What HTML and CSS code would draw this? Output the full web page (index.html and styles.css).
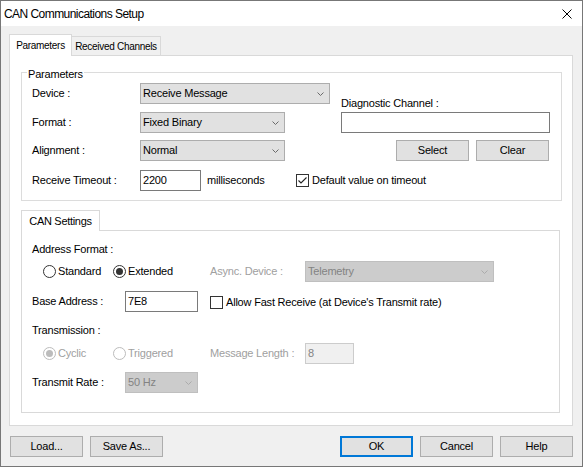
FILE: index.html
```html
<!DOCTYPE html>
<html>
<head>
<meta charset="utf-8">
<title>CAN Communications Setup</title>
<link rel="stylesheet" href="styles.css">
</head>
<body>
<div class="window">
  <div class="titlebar">
    <span class="title">CAN Communications Setup</span>
    <svg class="close" width="10" height="10" viewBox="0 0 10 10"><path d="M0.5 0.5L9.5 9.5M9.5 0.5L0.5 9.5" stroke="#000" stroke-width="1" fill="none"/></svg>
  </div>
  <div class="client">
    <div class="tabstrip">
      <div class="tab active">Parameters</div>
      <div class="tab">Received Channels</div>
    </div>
    <div class="pane">
      <div class="group">
        <div class="group-title">Parameters</div>
        <div class="group-body">
          <div class="col-left">
            <div class="row">
              <span class="lbl w108">Device :</span>
              <div class="select w190"><span class="val">Receive Message</span><svg class="chev" width="7" height="4" viewBox="0 0 7 4"><polyline points="0.5,0.5 3.5,3.5 6.5,0.5" fill="none" stroke="#6a6a6a" stroke-width="1"/></svg></div>
            </div>
            <div class="row mt8">
              <span class="lbl w108">Format :</span>
              <div class="select w145"><span class="val">Fixed Binary</span><svg class="chev" width="7" height="4" viewBox="0 0 7 4"><polyline points="0.5,0.5 3.5,3.5 6.5,0.5" fill="none" stroke="#6a6a6a" stroke-width="1"/></svg></div>
            </div>
            <div class="row mt7">
              <span class="lbl w108">Alignment :</span>
              <div class="select w145"><span class="val">Normal</span><svg class="chev" width="7" height="4" viewBox="0 0 7 4"><polyline points="0.5,0.5 3.5,3.5 6.5,0.5" fill="none" stroke="#6a6a6a" stroke-width="1"/></svg></div>
            </div>
            <div class="row mt9">
              <span class="lbl w108">Receive Timeout :</span>
              <div class="input w61">2200</div>
              <span class="ms">milliseconds</span>
              <div class="check">
                <span class="box"><svg width="11" height="11" viewBox="0 0 11 11"><polyline points="1.5,5.5 4,8 9.5,2.5" fill="none" stroke="#222" stroke-width="1.1"/></svg></span>
                <span class="check-text">Default value on timeout</span>
              </div>
            </div>
          </div>
          <div class="col-right">
            <div class="diag-lbl">Diagnostic Channel :</div>
            <div class="input w209 mt2"></div>
            <div class="btnrow">
              <div class="btn">Select</div>
              <div class="btn">Clear</div>
            </div>
          </div>
        </div>
      </div>

      <div class="subtabstrip"><div class="subtab">CAN Settings</div></div>
      <div class="subpane">
        <div class="sec-lbl mt12">Address Format :</div>
        <div class="row mt5 indent">
          <div class="radio-item w70"><span class="radio"></span><span class="rtext">Standard</span></div>
          <div class="radio-item w97"><span class="radio on"></span><span class="rtext">Extended</span></div>
          <span class="lbl w95 dis">Async. Device :</span>
          <div class="select disabled w189"><span class="val">Telemetry</span><svg class="chev" width="7" height="4" viewBox="0 0 7 4"><polyline points="0.5,0.5 3.5,3.5 6.5,0.5" fill="none" stroke="#ababab" stroke-width="1"/></svg></div>
        </div>
        <div class="row mt9">
          <span class="lbl w93">Base Address :</span>
          <div class="input w73">7E8</div>
          <div class="check ml12 top5">
            <span class="box"></span>
            <span class="check-text">Allow Fast Receive (at Device's Transmit rate)</span>
          </div>
        </div>
        <div class="sec-lbl mt12">Transmission :</div>
        <div class="row mt6 indent">
          <div class="radio-item w70"><span class="radio dis-on"></span><span class="rtext dis">Cyclic</span></div>
          <div class="radio-item w97"><span class="radio dis-off"></span><span class="rtext dis">Triggered</span></div>
          <span class="lbl w95 dis">Message Length :</span>
          <div class="input disabled w49">8</div>
        </div>
        <div class="row mt8">
          <span class="lbl w93">Transmit Rate :</span>
          <div class="select disabled w73"><span class="val">50 Hz</span><svg class="chev" width="7" height="4" viewBox="0 0 7 4"><polyline points="0.5,0.5 3.5,3.5 6.5,0.5" fill="none" stroke="#ababab" stroke-width="1"/></svg></div>
        </div>
      </div>
    </div>

    <div class="footer">
      <div class="btngroup">
        <div class="btn">Load...</div>
        <div class="btn">Save As...</div>
      </div>
      <div class="btngroup">
        <div class="btn default">OK</div>
        <div class="btn">Cancel</div>
        <div class="btn">Help</div>
      </div>
    </div>
  </div>
</div>
</body>
</html>
```

FILE: styles.css
```css
* { box-sizing: border-box; }
html, body { margin: 0; padding: 0; }
body {
  width: 583px;
  height: 467px;
  overflow: hidden;
  background: #ffffff;
  font-family: "Liberation Sans", Arial, sans-serif;
  font-size: 11px;
  line-height: 13px;
  letter-spacing: -0.2px;
  color: #000;
}
.window {
  width: 583px;
  height: 467px;
  border: 1px solid #777777;
  display: flex;
  flex-direction: column;
}
.titlebar {
  height: 25px;
  flex: none;
  background: #ffffff;
  display: flex;
  align-items: center;
}
.title {
  padding-left: 3px;
  font-size: 12px;
  line-height: 14px;
  letter-spacing: -0.55px;
}
.close { margin-left: auto; margin-right: 10px; display: block; }

.client {
  flex: 1;
  background: #f0f0f0;
  padding: 8px 9px 0 8px;
}
.tabstrip {
  height: 21px;
  display: flex;
  align-items: flex-end;
}
.tab {
  display: flex;
  align-items: center;
  justify-content: center;
  border: 1px solid #d9d9d9;
  border-bottom: none;
  font-size: 10px;
  letter-spacing: -0.3px;
  white-space: nowrap;
}
.tab.active {
  width: 63px;
  height: 22px;
  margin-bottom: -1px;
  background: #ffffff;
  position: relative;
  z-index: 1;
}
.tab:not(.active) {
  width: 90px;
  height: 19px;
  margin-left: -1px;
  background: #f0f0f0;
}
.pane {
  height: 371px;
  border: 1px solid #d9d9d9;
  background: #ffffff;
  padding: 0;
}

.group {
  margin: 16px 10px 0 11px;
  height: 129px;
  border: 1px solid #dcdcdc;
}
.group-title {
  width: fit-content;
  margin: -6px 0 0 5px;
  padding: 0 1px;
  line-height: 14px;
  background: #ffffff;
}
.group-body {
  display: flex;
  padding: 2px 0 0 10px;
}
.col-left { width: 298px; flex: none; }
.col-right { width: 209px; flex: none; margin-left: 11px; padding-top: 14px; }
.diag-lbl { line-height: 13px; white-space: nowrap; }

.row {
  display: flex;
  align-items: center;
  height: 21px;
  white-space: nowrap;
}
.mt2 { margin-top: 2px; }
.mt5 { margin-top: 5px; }
.mt6 { margin-top: 6px; }
.mt7 { margin-top: 7px; }
.mt8 { margin-top: 8px; }
.mt9 { margin-top: 9px; }
.mt12 { margin-top: 12px; }
.ml12 { margin-left: 12px; }

.lbl { flex: none; }
.w108 { width: 108px; }
.w93 { width: 93px; }
.w95 { width: 95px; }
.w70 { width: 70px; }
.w97 { width: 97px; }
.w190 { width: 190px; }
.w189 { width: 189px; }
.w145 { width: 145px; }
.w209 { width: 209px; }
.w73 { width: 73px; }
.w61 { width: 61px; }
.w49 { width: 49px; }

.select {
  height: 21px;
  flex: none;
  display: flex;
  align-items: center;
  background: #e1e1e1;
  border: 1px solid #adadad;
  padding-left: 2px;
}
.select .chev { margin-left: auto; margin-right: 5px; display: block; }
.select.disabled {
  background: #cccccc;
  border-color: #bfbfbf;
  color: #838383;
}
.input {
  height: 21px;
  flex: none;
  display: flex;
  align-items: center;
  background: #ffffff;
  border: 1px solid #7a7a7a;
  padding-left: 2px;
}
.input.disabled {
  background: #f0f0f0;
  border-color: #cccccc;
  color: #838383;
}
.ms { width: 89px; margin-left: 6px; flex: none; }

.check { display: flex; align-items: center; flex: none; }
.check.top5 { align-self: flex-start; margin-top: 5px; }
.box {
  width: 13px;
  height: 13px;
  border: 1px solid #333333;
  background: #ffffff;
  display: block;
  flex: none;
}
.box svg { display: block; }
.check-text { margin-left: 3px; }

.btnrow {
  display: flex;
  justify-content: flex-end;
  gap: 7px;
  padding-right: 1px;
  margin-top: 7px;
}
.btn {
  width: 73px;
  height: 21px;
  flex: none;
  display: flex;
  align-items: center;
  justify-content: center;
  background: #e1e1e1;
  border: 1px solid #adadad;
}
.btn.default { border: 2px solid #0078d7; }

.subtabstrip {
  margin: 9px 0 0 11px;
  height: 20px;
  display: flex;
  align-items: flex-start;
}
.subtab {
  width: 79px;
  height: 21px;
  display: flex;
  align-items: center;
  justify-content: center;
  background: #ffffff;
  border: 1px solid #d9d9d9;
  border-bottom: none;
  letter-spacing: -0.3px;
  position: relative;
  z-index: 1;
}
.subpane {
  margin: 0 12px 0 11px;
  height: 183px;
  border: 1px solid #d9d9d9;
  background: #ffffff;
  padding: 0 0 0 10px;
}
.sec-lbl { line-height: 13px; }
.indent { padding-left: 11px; }

.radio-item { display: flex; align-items: center; flex: none; }
.radio {
  width: 13px;
  height: 13px;
  border-radius: 50%;
  border: 1px solid #333333;
  background: #ffffff;
  flex: none;
  display: flex;
  align-items: center;
  justify-content: center;
}
.radio.on::after,
.radio.dis-on::after {
  content: "";
  width: 7px;
  height: 7px;
  border-radius: 50%;
  background: #333333;
}
.radio.dis-on, .radio.dis-off { border-color: #bcbcbc; }
.radio.dis-on::after { background: #bcbcbc; }
.rtext { margin-left: 2px; }
.dis { color: #a0a0a0; }

.footer {
  margin-top: 10px;
  padding-left: 1px;
  display: flex;
  justify-content: space-between;
}
.btngroup { display: flex; gap: 7px; }
```
